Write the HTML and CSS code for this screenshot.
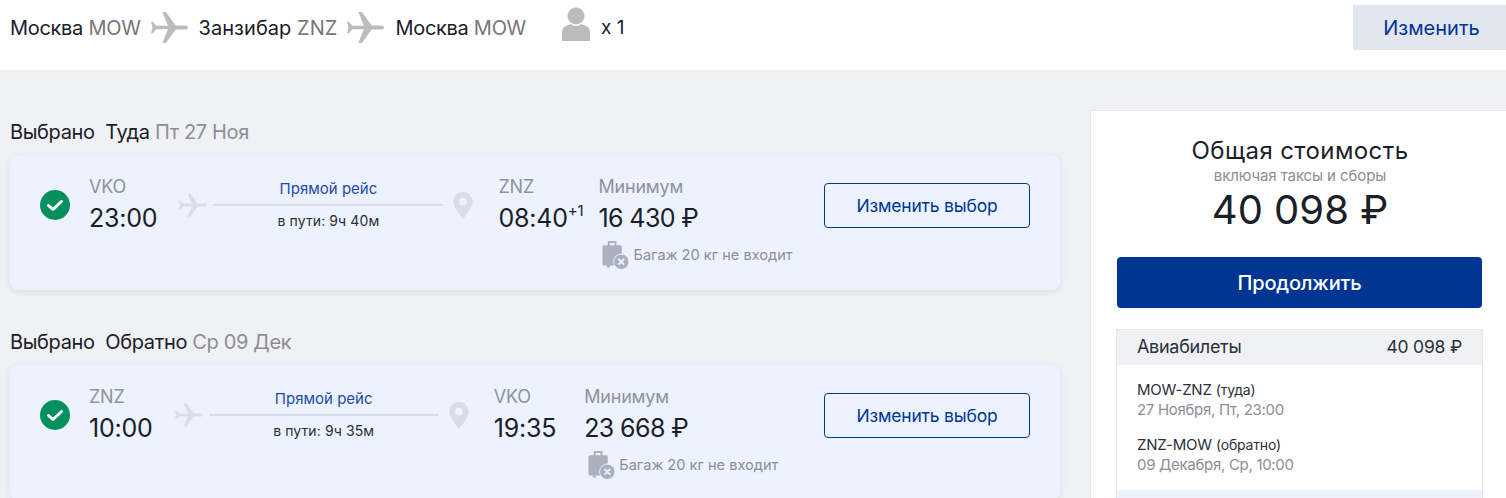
FILE: index.html
```html
<!DOCTYPE html>
<html lang="ru">
<head>
<meta charset="utf-8">
<title>Выбранные рейсы</title>
<link rel="stylesheet" href="styles.css">
</head>
<body>
<svg class="defs" width="0" height="0" aria-hidden="true">
  <symbol id="plane" viewBox="0 0 36 30">
    <path d="M0 9.500 L2 9.500 L5 13.200 L16.500 13.200 L11 0 L14.500 0 L24 13 L33 13 Q36 13 36 15 Q36 17 33 17 L24 17 L14.500 30 L11 30 L16.500 16.800 L5 16.800 L2 20.500 L0 20.500 L1.500 15 Z"/>
  </symbol>
  <symbol id="pin" viewBox="0 0 20 28">
    <path fill-rule="evenodd" d="M10 0 C15.500 0 20 4.300 20 9.800 C20 15.500 14 23 10 28 C6 23 0 15.500 0 9.800 C0 4.300 4.500 0 10 0 Z M10 6 A4 4 0 1 0 10 14 A4 4 0 1 0 10 6 Z"/>
  </symbol>
  <symbol id="bag" viewBox="0 0 28 30">
    <path d="M6 5 V0.500 H15 V5 H19 Q20.500 5 20.500 6.500 V24.500 Q20.500 26 19 26 H8 V28 H5 V26 H2 Q0.500 26 0.500 24.500 V6.500 Q0.500 5 2 5 Z M8 2.500 V5 H13 V2.500 Z"/>
    <circle cx="20" cy="22" r="8" stroke="#ecf3ff" stroke-width="1"/>
    <path d="M17 19 L23 25 M23 19 L17 25" stroke="#ecf3ff" stroke-width="2" fill="none"/>
  </symbol>
</svg>

<header class="topbar">
  <div class="route">
    <span class="city">Москва <em>MOW</em></span>
    <svg class="route-plane"><use href="#plane"/></svg>
    <span class="city city-long">Занзибар <em>ZNZ</em></span>
    <svg class="route-plane"><use href="#plane"/></svg>
    <span class="city">Москва <em>MOW</em></span>
    <svg class="person" viewBox="0 0 28 34">
      <circle cx="14" cy="9" r="8.500"/>
      <path d="M0 34 V25 Q0 20 5 18.500 L9 17 Q14 21 19 17 L23 18.500 Q28 20 28 25 V34 Z"/>
    </svg>
    <span class="count">x 1</span>
  </div>
  <button class="edit-search">Изменить</button>
</header>

<main class="page">
  <section class="flights">
    <h2 class="leg-title">Выбрано&nbsp; Туда <span>Пт 27 Ноя</span></h2>
    <article class="card">
      <svg class="check" viewBox="0 0 30 30"><circle cx="15" cy="15" r="15"/><path d="M8.500 15.500 L13 19.500 L21.500 11.500"/></svg>
      <div class="point"><span class="code">VKO</span><span class="time">23:00</span></div>
      <svg class="leg-plane"><use href="#plane"/></svg>
      <div class="track">
        <span class="direct">Прямой рейс</span>
        <span class="duration">в пути: 9ч 40м</span>
      </div>
      <svg class="leg-pin"><use href="#pin"/></svg>
      <div class="point arrive"><span class="code">ZNZ</span><span class="time">08:40<sup>+1</sup></span></div>
      <div class="fare">
        <span class="code">Минимум</span>
        <span class="time">16 430 ₽</span>
        <span class="baggage"><svg class="bag"><use href="#bag"/></svg>Багаж 20 кг не входит</span>
      </div>
      <button class="change">Изменить выбор</button>
    </article>

    <h2 class="leg-title">Выбрано&nbsp; Обратно <span>Ср 09 Дек</span></h2>
    <article class="card">
      <svg class="check" viewBox="0 0 30 30"><circle cx="15" cy="15" r="15"/><path d="M8.500 15.500 L13 19.500 L21.500 11.500"/></svg>
      <div class="point"><span class="code">ZNZ</span><span class="time">10:00</span></div>
      <svg class="leg-plane"><use href="#plane"/></svg>
      <div class="track">
        <span class="direct">Прямой рейс</span>
        <span class="duration">в пути: 9ч 35м</span>
      </div>
      <svg class="leg-pin"><use href="#pin"/></svg>
      <div class="point arrive"><span class="code">VKO</span><span class="time">19:35</span></div>
      <div class="fare">
        <span class="code">Минимум</span>
        <span class="time">23 668 ₽</span>
        <span class="baggage"><svg class="bag"><use href="#bag"/></svg>Багаж 20 кг не входит</span>
      </div>
      <button class="change">Изменить выбор</button>
    </article>
  </section>

  <aside class="summary">
    <h2 class="total-title">Общая стоимость</h2>
    <p class="total-note">включая таксы и сборы</p>
    <p class="total-price">40 098 ₽</p>
    <button class="continue">Продолжить</button>
    <div class="breakdown">
      <div class="breakdown-head"><span>Авиабилеты</span><span class="head-sum">40 098 ₽</span></div>
      <div class="breakdown-body">
        <div class="ticket">
          <p class="ticket-route">MOW-ZNZ <small>(туда)</small></p>
          <p class="ticket-date">27 Ноября, Пт, 23:00</p>
        </div>
        <div class="ticket">
          <p class="ticket-route">ZNZ-MOW <small>(обратно)</small></p>
          <p class="ticket-date">09 Декабря, Ср, 10:00</p>
        </div>
      </div>
      <div class="breakdown-foot"></div>
    </div>
  </aside>
</main>
</body>
</html>
```

FILE: styles.css
```css
* { box-sizing: border-box; }
html, body { margin: 0; height: 498px; overflow: hidden; }
body {
  font-family: Inter, "Liberation Sans", sans-serif;
  color: #1a2028;
  background: #eff1f5;
}
.defs { position: absolute; }
button { font-family: inherit; cursor: pointer; }
p, h2 { margin: 0; font-weight: 400; }

.topbar {
  height: 70px;
  background: #fff;
  display: flex;
  align-items: flex-start;
  justify-content: space-between;
  padding-top: 5px;
}
.route { display: flex; align-items: center; height: 45px; padding-left: 10px; }
.city { font-size: 20px; letter-spacing: -0.300px; white-space: nowrap; line-height: 44px; }
.city-long { letter-spacing: 0.050px; }
.city em { font-style: normal; color: #777; }
.route-plane { width: 37px; height: 31px; fill: #bcbcbc; margin: 0 11px 0 10px; flex: none; }
.person { width: 28px; height: 34px; fill: #bcbcbc; margin: 0 11px 8px 36px; flex: none; }
.count { font-size: 19px; line-height: 44px; }
.edit-search {
  width: 153px;
  height: 45px;
  border: 0;
  background: #e2e6ef;
  color: #003594;
  font-size: 20px;
  padding: 0 0 0 4px;
}

.page { display: flex; align-items: flex-start; height: 428px; }
.flights { width: 1060px; padding: 50px 0 0 10px; flex: none; }
.leg-title {
  font-size: 20px;
  line-height: 24px;
  letter-spacing: -0.350px;
  margin-bottom: 11px;
  height: 24px;
}
.leg-title span { color: #8b8e96; }

.card {
  width: 1050px;
  height: 135px;
  margin-bottom: 40px;
  background: #ecf3ff;
  border-radius: 8px;
  box-shadow: 0 2px 6px rgba(40, 50, 80, 0.1);
  display: flex;
  align-items: flex-start;
  padding: 20px 30px 0;
}
.check { width: 30px; height: 30px; flex: none; margin: 15px 19px 0 0; }
.check circle { fill: #07905f; }
.check path { fill: none; stroke: #fff; stroke-width: 3; stroke-linecap: round; stroke-linejoin: round; }

.point, .fare { display: flex; flex-direction: column; flex: none; }
.code { font-size: 18px; line-height: 24px; color: #8f929a; letter-spacing: -0.200px; }
.time { font-size: 25px; line-height: 36px; white-space: nowrap; letter-spacing: -0.200px; margin-top: 1px; }
.fare .time { letter-spacing: -0.600px; }
.time sup { font-size: 15px; line-height: 0; vertical-align: 11px; margin-right: -13px; }

.leg-plane { width: 28px; height: 24px; fill: #d8dde7; margin: 18px 6px 0 22px; flex: none; }
.track { width: 230px; flex: none; display: flex; flex-direction: column; align-items: center; position: relative; }
.track::before { content: ""; position: absolute; left: 0; right: 0; top: 29px; height: 2px; background: #d8dde7; }
.direct { font-size: 15px; line-height: 20px; margin-top: 4px; color: #1f4aa8; }
.duration { font-size: 14px; line-height: 20px; margin-top: 12px; color: #2a2f38; letter-spacing: 0.100px; }
.leg-pin { width: 20px; height: 27px; fill: #d8dde7; margin: 17px 25px 0 10px; flex: none; }
.arrive { padding-right: 28px; }

.baggage { display: flex; align-items: center; font-size: 14.600px; color: #8b8e96; margin: 4px 0 0 4px; white-space: nowrap; }
.bag { width: 27px; height: 30px; fill: #aab0bd; margin-right: 4px; }

.change {
  width: 206px;
  height: 45px;
  margin: 8px 0 0 auto;
  background: transparent;
  border: 1px solid #003594;
  border-radius: 4px;
  color: #003594;
  font-size: 17.500px;
  letter-spacing: -0.200px;
}

.summary {
  margin: 40px 0 0 30px;
  width: 416px;
  height: 388px;
  background: #fff;
  border: 1px solid #e6e6e6;
  border-width: 1px 0 0 1px;
  padding: 25px 23px 0 26px;
  text-align: center;
}
.total-title { font-size: 24px; line-height: 30px; letter-spacing: 0.400px; }
.total-note { font-size: 15px; line-height: 20px; color: #8b8e96; letter-spacing: -0.100px; }
.total-price { font-size: 40px; line-height: 48px; }
.continue {
  display: block;
  width: 365px;
  height: 51px;
  margin-top: 23px;
  border: 0;
  border-radius: 4px;
  background: #003594;
  color: #fff;
  font-size: 20px;
  font-weight: 500;
  letter-spacing: -0.200px;
}
.breakdown {
  width: 367px;
  margin: 21px 0 0 -1px;
  border: 1px solid #e6e6e6;
  border-width: 1px 1px 0;
  text-align: left;
}
.breakdown-head {
  height: 35px;
  background: #eff1f5;
  display: flex;
  align-items: center;
  justify-content: space-between;
  padding: 0 20px 2px;
  font-size: 18px;
  letter-spacing: -0.300px;
  color: #2a2f38;
}
.head-sum { font-size: 17.500px; letter-spacing: -0.200px; }
.breakdown-body { padding: 15px 20px 15px; }
.ticket + .ticket { margin-top: 15px; }
.ticket-route { font-size: 15px; line-height: 20px; color: #2a2f38; letter-spacing: -0.200px; }
.ticket-route small { font-size: 14px; }
.ticket-date { font-size: 15px; line-height: 20px; color: #8b8e96; letter-spacing: -0.300px; }
.breakdown-foot { height: 8px; background: #ecf3ff; }
```
